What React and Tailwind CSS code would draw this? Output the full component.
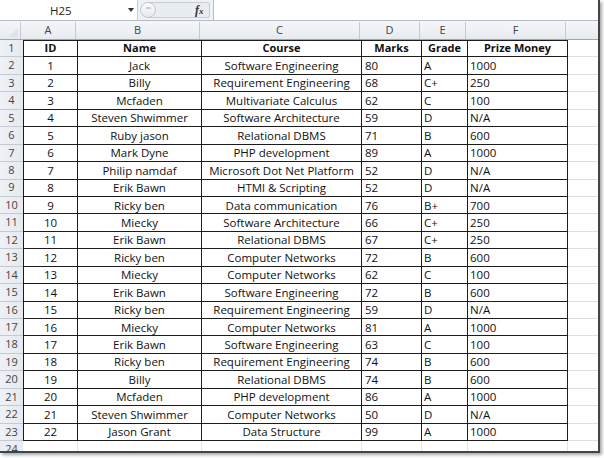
import React from 'react';

const rows = [
  ['ID', 'Name', 'Course', 'Marks', 'Grade', 'Prize Money'],
  ['1', 'Jack', 'Software Engineering', '80', 'A', '1000'],
  ['2', 'Billy', 'Requirement Engineering', '68', 'C+', '250'],
  ['3', 'Mcfaden', 'Multivariate Calculus', '62', 'C', '100'],
  ['4', 'Steven Shwimmer', 'Software Architecture', '59', 'D', 'N/A'],
  ['5', 'Ruby jason', 'Relational DBMS', '71', 'B', '600'],
  ['6', 'Mark Dyne', 'PHP development', '89', 'A', '1000'],
  ['7', 'Philip namdaf', 'Microsoft Dot Net Platform', '52', 'D', 'N/A'],
  ['8', 'Erik Bawn', 'HTMl & Scripting', '52', 'D', 'N/A'],
  ['9', 'Ricky ben', 'Data communication', '76', 'B+', '700'],
  ['10', 'Miecky', 'Software Architecture', '66', 'C+', '250'],
  ['11', 'Erik Bawn', 'Relational DBMS', '67', 'C+', '250'],
  ['12', 'Ricky ben', 'Computer Networks', '72', 'B', '600'],
  ['13', 'Miecky', 'Computer Networks', '62', 'C', '100'],
  ['14', 'Erik Bawn', 'Software Engineering', '72', 'B', '600'],
  ['15', 'Ricky ben', 'Requirement Engineering', '59', 'D', 'N/A'],
  ['16', 'Miecky', 'Computer Networks', '81', 'A', '1000'],
  ['17', 'Erik Bawn', 'Software Engineering', '63', 'C', '100'],
  ['18', 'Ricky ben', 'Requirement Engineering', '74', 'B', '600'],
  ['19', 'Billy', 'Relational DBMS', '74', 'B', '600'],
  ['20', 'Mcfaden', 'PHP development', '86', 'A', '1000'],
  ['21', 'Steven Shwimmer', 'Computer Networks', '50', 'D', 'N/A'],
  ['22', 'Jason Grant', 'Data Structure', '99', 'A', '1000'],
];

// column widths A..F, then the partial G
const colClasses = ['w-[55px]', 'w-[124px]', 'w-[160px]', 'w-[60px]', 'w-[46px]', 'w-[100px]'];
const align = ['justify-center', 'justify-center', 'justify-center', 'justify-start pl-[3px]', 'justify-start pl-[2px]', 'justify-start pl-[2px]'];

export default function App() {
  return (
    <div className="w-[604px] h-[458px] bg-white overflow-hidden" style={{ fontFamily: '"Open Sans", "Noto Sans", sans-serif' }}>
      <div className="w-[600px] h-[453px] border-r-2 border-b-2 border-[#444] shadow-[2px_2px_3px_rgba(0,0,0,0.35)] bg-white overflow-hidden flex flex-col">
        {/* Formula bar */}
        <div className="h-[21px] flex items-stretch border-b border-[#b6bcc6] bg-[#eef1f5] shrink-0">
          <div className="w-[138px] bg-white relative border-r border-[#c8cdd4]">
            <span className="absolute left-[50px] top-[2px] text-[11.5px] text-[#222]">H25</span>
            <span className="absolute left-[128px] top-[8px] w-0 h-0 border-l-[3px] border-r-[3px] border-t-[4px] border-l-transparent border-r-transparent border-t-[#333]" />
          </div>
          <div className="w-[75px] relative">
            <div className="absolute left-[10px] top-[2px] w-[62px] h-[16px] rounded-r-[3px] border-y border-r border-[#c8cdd4] bg-[#e9edf2]" />
            <div className="absolute left-[2px] top-[2px] w-[16px] h-[16px] rounded-full border border-[#c2c7cf] bg-gradient-to-b from-[#fbfcfd] to-[#e4e8ee] flex items-center justify-center">
              <span className="w-[5px] h-[2px] rounded-full bg-[#c7ccd3] -mt-[4px]" />
            </div>
            <span className="absolute left-[57px] top-[1px] text-[12px] italic font-bold text-[#333]" style={{ fontFamily: '"Liberation Serif", serif' }}>f<span className="text-[9px]">x</span></span>
          </div>
          <div className="flex-1 bg-white border-l border-[#b6bcc6]" />
        </div>

        <div className="h-[1px] bg-[#f3f5f8] shrink-0" />

        {/* Column headers */}
        <div className="flex h-[18px] shrink-0 bg-gradient-to-b from-[#f4f6f9] to-[#e6eaef] border-b border-[#9fa6b0] text-[11px] text-[#444]">
          <div className="w-[23px] border-r border-[#c5cad2] relative">
            <svg className="absolute right-[2px] bottom-[2px]" width="9" height="9" viewBox="0 0 9 9"><path d="M9 0 L9 9 L0 9 Z" fill="#dfe3e8" /></svg>
          </div>
          {['A', 'B', 'C', 'D', 'E', 'F'].map((c, i) => (
            <div key={c} className={`${colClasses[i]} shrink-0 border-r border-[#c5cad2] flex items-center justify-center`}>{c}</div>
          ))}
          <div className="w-[32px] shrink-0" />
        </div>

        {/* Rows */}
        {rows.map((r, ri) => (
          <div key={ri} className="flex h-[17.45px] shrink-0 text-[#111]">
            <div className="w-[23px] shrink-0 text-[11px] bg-gradient-to-r from-[#eef1f5] to-[#e6eaef] border-b border-[#c5cad2] flex items-center justify-center text-[#444]">{ri + 1}</div>
            {r.map((v, ci) => (
              <div
                key={ci}
                className={`${colClasses[ci]} shrink-0 flex items-center whitespace-nowrap overflow-hidden border-r border-b border-[#1c1c1c] ${ci === 0 ? 'border-l' : ''} ${ri === 0 ? 'border-t font-bold justify-center text-[11px]' : `text-[11.5px] ${align[ci]}`}`}
              >
                {v}
              </div>
            ))}
            <div className="w-[32px] shrink-0 border-b border-[#dde0e4]" />
          </div>
        ))}

        {/* Row 24 (partial) */}
        <div className="flex h-[12px] shrink-0 text-[11px]">
          <div className="w-[23px] shrink-0 bg-[#eaedf1] flex items-start justify-center text-[#444] leading-[16px]">24</div>
          {colClasses.map((w, i) => (
            <div key={i} className={`${w} shrink-0 border-r border-[#e1e4e8]`} />
          ))}
          <div className="w-[32px] shrink-0" />
        </div>
      </div>
    </div>
  );
}
